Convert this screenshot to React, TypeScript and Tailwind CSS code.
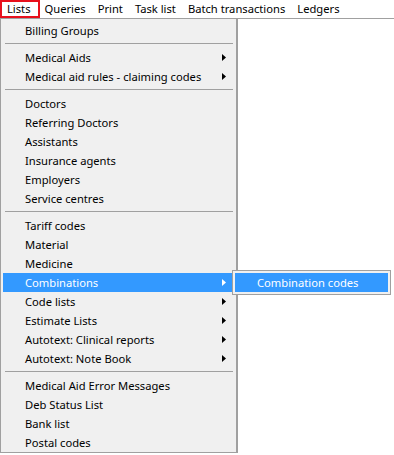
import React from "react";

type Entry = { label: string; sub?: boolean; active?: boolean } | "sep";

const menuBar = ["Lists", "Queries", "Print", "Task list", "Batch transactions", "Ledgers"];

const entries: Entry[] = [
  { label: "Billing Groups" },
  "sep",
  { label: "Medical Aids", sub: true },
  { label: "Medical aid rules - claiming codes", sub: true },
  "sep",
  { label: "Doctors" },
  { label: "Referring Doctors" },
  { label: "Assistants" },
  { label: "Insurance agents" },
  { label: "Employers" },
  { label: "Service centres" },
  "sep",
  { label: "Tariff codes" },
  { label: "Material" },
  { label: "Medicine" },
  { label: "Combinations", sub: true, active: true },
  { label: "Code lists", sub: true },
  { label: "Estimate Lists", sub: true },
  { label: "Autotext: Clinical reports", sub: true },
  { label: "Autotext: Note Book", sub: true },
  "sep",
  { label: "Medical Aid Error Messages" },
  { label: "Deb Status List" },
  { label: "Bank list" },
  { label: "Postal codes" },
];

function Arrow({ white }: { white?: boolean }) {
  return (
    <svg width="4" height="7" viewBox="0 0 4 7" className="shrink-0">
      <path d="M0 0 L4 3.5 L0 7 Z" fill={white ? "#ffffff" : "#000000"} />
    </svg>
  );
}

function MenuRow({ label, sub, active }: { label: string; sub?: boolean; active?: boolean }) {
  return (
    <div
      className={`flex h-[19px] items-center pl-[22px] pr-[8px] ${
        active ? "bg-[#3399ff] text-white" : "text-black"
      }`}
    >
      <span className="flex-1 whitespace-nowrap">{label}</span>
      {sub ? <Arrow white={active} /> : null}
    </div>
  );
}

export default function App() {
  return (
    <div
      className="relative h-[455px] w-[394px] overflow-hidden bg-white text-[11.2px] leading-none"
      style={{ fontFamily: '"Noto Sans", "Open Sans", sans-serif' }}
    >
      <div className="flex h-[19px] items-center border-b border-[#a0a0a0] bg-white">
        {menuBar.map((label, i) => (
          <div
            key={label}
            className={`flex h-full items-center whitespace-nowrap ${
              i === 0
                ? "border-2 border-[#e8101c] pl-[5px] pr-[7px]"
                : "pl-[5px] pr-[7px]"
            }`}
          >
            {label}
          </div>
        ))}
      </div>

      {/* dropdown */}
      <div className="absolute left-0 top-[18px] flex w-[238px] flex-col border border-r-2 border-[#a0a0a0] bg-[#f0f0f0] px-[2px] pt-[2px]">
        {entries.map((e, i) =>
          e === "sep" ? (
            <div key={i} className="py-[3px] pl-[2px] pr-[1px]">
              <div className="mb-px h-px bg-[#a0a0a0]" />
            </div>
          ) : (
            <MenuRow key={i} {...e} />
          ),
        )}
      </div>

      {/* submenu */}
      <div className="absolute left-[232px] top-[270px] w-[159px] border border-[#a0a0a0] bg-[#f0f0f0] p-[2px]">
        <div className="flex h-[19px] items-center bg-[#3399ff] pl-[22px] text-white whitespace-nowrap">
          Combination codes
        </div>
      </div>
    </div>
  );
}
